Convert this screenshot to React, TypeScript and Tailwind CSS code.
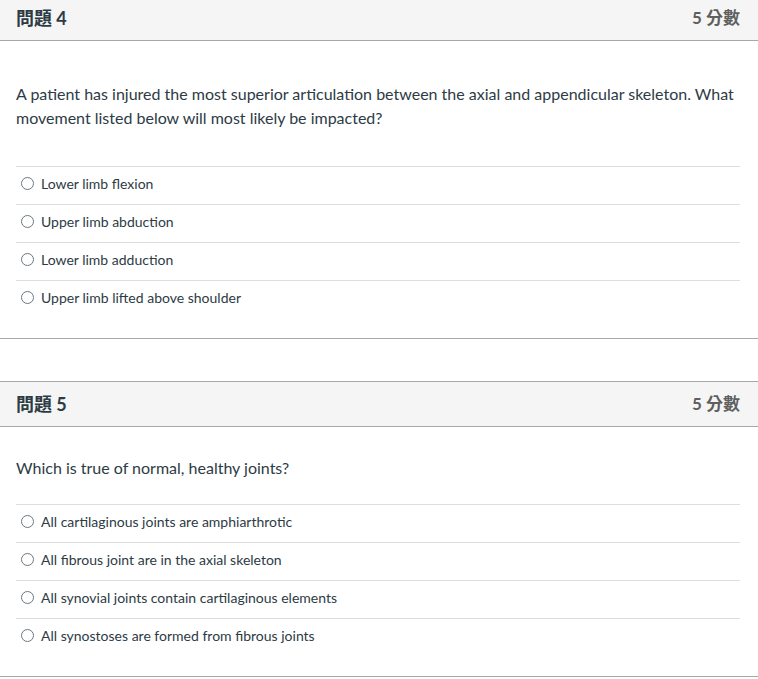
import React from "react";

const font = { fontFamily: 'Lato, "Noto Sans CJK TC", "Noto Sans", sans-serif' };

function Radio() {
  return (
    <span className="inline-block w-[13px] h-[13px] rounded-full border border-[#6b7780] bg-white shrink-0" />
  );
}

function Answer({ text }: { text: string }) {
  return (
    <div className="h-[38px] flex items-center pl-[5px] pb-[4px] gap-[7px] border-t border-[#dcdfe1]">
      <Radio />
      <span className="text-[14px] text-[#2d3b45]">{text}</span>
    </div>
  );
}

function Card({
  title,
  question,
  answers,
  qClass,
}: {
  title: string;
  question: string;
  answers: string[];
  qClass: string;
}) {
  return (
    <div className="border-t border-b border-[#a8a8a8] bg-white">
      <div className="h-[45px] bg-[#f5f5f5] border-b border-[#a8a8a8] flex items-center justify-between pl-[16px] pr-[18px]">
        <span className="text-[18px] font-bold text-[#2d3b45]">{title}</span>
        <span className="text-[17px] font-bold text-[#5f5f5f]">5 分數</span>
      </div>
      <div className="pl-[16px] pr-[18px] pb-[20px]">
        <p className={"text-[16px] leading-[24px] text-[#2d3b45] " + qClass}>{question}</p>
        <div>
          {answers.map((a, i) => (
            <Answer key={i} text={a} />
          ))}
        </div>
      </div>
    </div>
  );
}

export default function App() {
  return (
    <div className="w-[758px] h-[679px] overflow-hidden bg-white" style={font}>
      <div className="mt-[-5px] flex flex-col gap-[42px]">
        <Card
          title="問題 4"
          question="A patient has injured the most superior articulation between the axial and appendicular skeleton. What movement listed below will most likely be impacted?"
          answers={[
            "Lower limb flexion",
            "Upper limb abduction",
            "Lower limb adduction",
            "Upper limb lifted above shoulder",
          ]}
          qClass="pt-[41px] pb-[36px]"
        />
        <Card
          title="問題 5"
          question="Which is true of normal, healthy joints?"
          answers={[
            "All cartilaginous joints are amphiarthrotic",
            "All fibrous joint are in the axial skeleton",
            "All synovial joints contain cartilaginous elements",
            "All synostoses are formed from fibrous joints",
          ]}
          qClass="pt-[29px] pb-[24px]"
        />
      </div>
    </div>
  );
}
